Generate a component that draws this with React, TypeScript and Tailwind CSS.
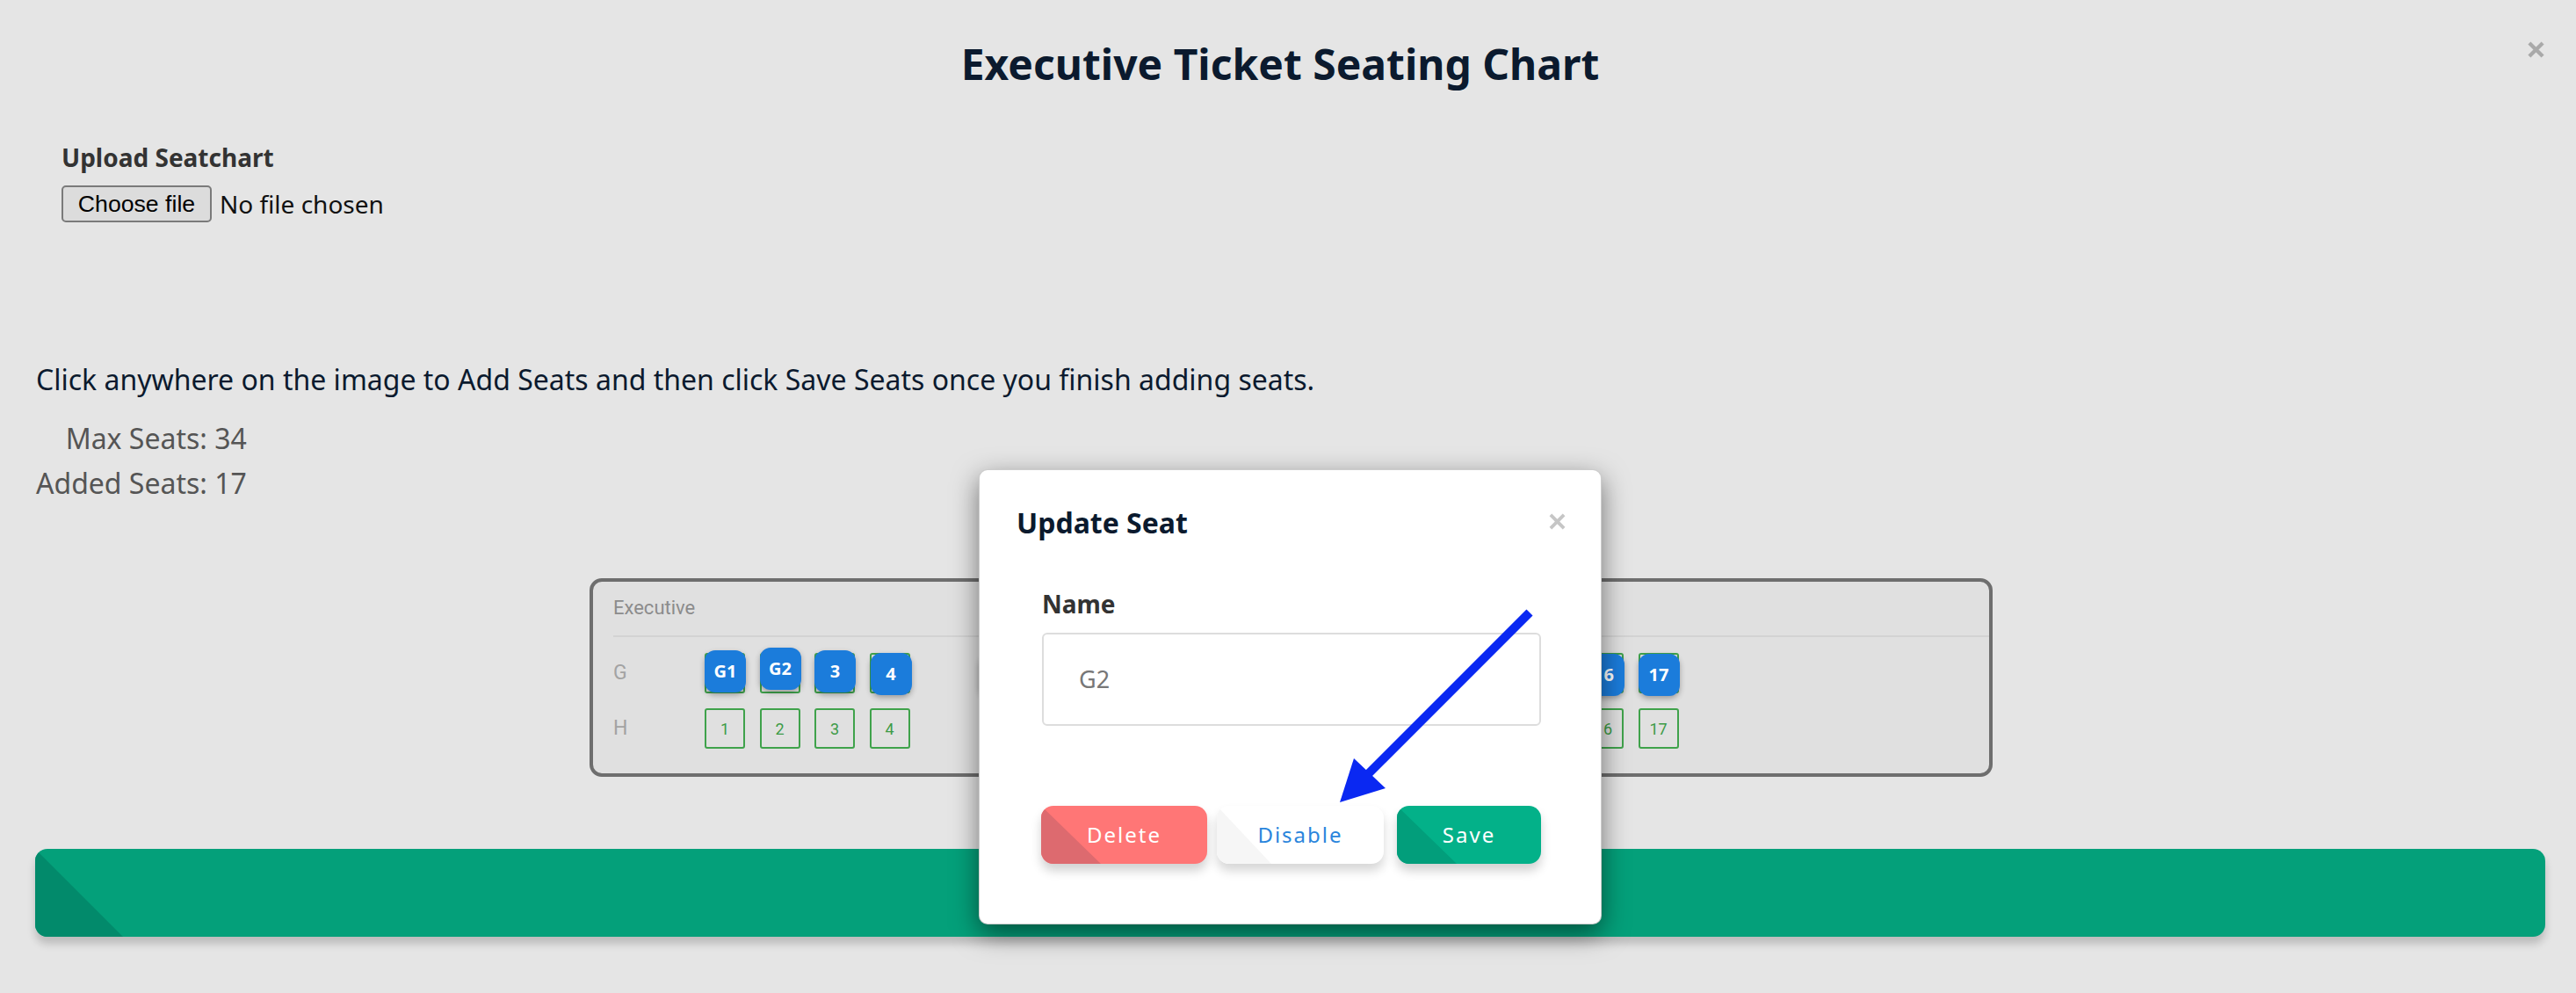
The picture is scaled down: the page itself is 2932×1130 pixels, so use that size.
import React from "react";

const seatNums = Array.from({ length: 17 }, (_, i) => i + 1);

const blueOffset: Record<number, string> = {
  1: "-top-[5px] -left-[2px]",
  2: "-top-[8px] -left-[2px]",
  3: "-top-[5px] -left-[2px]",
  4: "-top-[2px] -left-[1px]",
};

function Seat({ n, blue }: { n: number; blue?: string }) {
  return (
    <div
      className={
        n === 5
          ? "relative ml-[62.5px] flex h-[46px] w-[46px] items-center justify-center rounded-[3px] border-2 border-[#3fa24b] text-[18px] text-[#3d9b47]"
          : "relative flex h-[46px] w-[46px] items-center justify-center rounded-[3px] border-2 border-[#3fa24b] text-[18px] text-[#3d9b47]"
      }
    >
      {blue ? null : n}
      {blue && (
        <div
          className={
            "absolute flex h-[48px] w-[47px] items-center justify-center rounded-[12px] bg-[#1b7cdb] text-[20px] font-bold text-white shadow-[0_3px_6px_rgba(0,0,0,0.3)] [font-family:'Noto_Sans',sans-serif] " +
            (blueOffset[n] ?? "-top-[1px] -left-[2px]")
          }
        >
          {blue}
        </div>
      )}
    </div>
  );
}

function XIcon({ color, size, stroke }: { color: string; size: number; stroke: number }) {
  return (
    <svg width={size} height={size} viewBox="0 0 20 20">
      <line x1="2" y1="2" x2="18" y2="18" stroke={color} strokeWidth={stroke} />
      <line x1="18" y1="2" x2="2" y2="18" stroke={color} strokeWidth={stroke} />
    </svg>
  );
}

export default function App() {
  return (
    <div className="relative h-[1130px] w-[2932px] overflow-hidden bg-[#e5e5e5] [font-family:'Noto_Sans',sans-serif]">
      {/* page close */}
      <div className="absolute left-[2877px] top-[47px]">
        <XIcon color="#a9a9a9" size={19} stroke={4.5} />
      </div>

      {/* title */}
      <div className="pr-[18px] pt-[44px] text-center">
        <h1 className="text-[48px] font-bold leading-[58px] text-[#0b1a2e]">Executive Ticket Seating Chart</h1>
      </div>

      {/* upload */}
      <div className="ml-[70px] mt-[60px]">
        <div className="text-[28px] font-bold leading-[34px] text-[#333333]">Upload Seatchart</div>
        <div className="mt-[15px] flex items-center">
          <div className="flex h-[42px] w-[171px] items-center justify-center rounded-[5px] border-2 border-[#7a7a7a] bg-[#dcdcdc] text-[26.67px] text-black [font-family:'Liberation_Sans',Arial,sans-serif]">
            Choose file
          </div>
          <span className="ml-[9px] text-[28px] text-[#111111]">No file chosen</span>
        </div>
      </div>

      {/* instructions */}
      <div className="ml-[41px] mt-[159px] text-[32px] leading-[40px] text-[#0b1a2e]">
        Click anywhere on the image to Add Seats and then click Save Seats once you finish adding seats.
      </div>
      <div className="ml-[41px] mt-[21px] inline-flex flex-col items-end text-[32px] leading-[51px] text-[#555555]">
        <div>Max Seats: 34</div>
        <div>Added Seats: 17</div>
      </div>

      {/* seat chart */}
      <div className="ml-[671px] mt-[83px] w-[1597px] rounded-[14px] border-4 border-[#6e6e6e] bg-[#e0e0e0] pb-[28px] [font-family:Roboto,sans-serif]">
        <div className="ml-[23px] border-b-2 border-[#d3d3d3] pb-[18px] pt-[17px] text-[22px] leading-[26px] text-[#8c8c8c]">
          Executive
        </div>
        <div className="ml-[23px] mt-[18px] flex h-[46px] items-center">
          <div className="w-[104px] text-[23px] text-[#a3a3a3]">G</div>
          <div className="flex gap-[16.5px]">
            {seatNums.map((n) => (
              <Seat key={n} n={n} blue={n === 1 ? "G1" : n === 2 ? "G2" : String(n)} />
            ))}
          </div>
        </div>
        <div className="ml-[23px] mt-[17px] flex h-[46px] items-center">
          <div className="w-[104px] text-[23px] text-[#a3a3a3]">H</div>
          <div className="flex gap-[16.5px]">
            {seatNums.map((n) => (
              <Seat key={n} n={n} />
            ))}
          </div>
        </div>
      </div>

      {/* green bar */}
      <div className="relative ml-[40px] mr-[35px] mt-[82px] h-[100px] overflow-hidden rounded-[14px] bg-[#04a07a] shadow-[0_8px_10px_rgba(0,0,0,0.18)]">
        <div className="absolute inset-0 bg-[#028a6b] [clip-path:polygon(0_0,100px_100%,0_100%)]" />
      </div>

      {/* modal */}
      <div className="absolute left-[1114px] top-[534px] h-[518px] w-[709px] rounded-[10px] border border-[rgba(0,0,0,0.2)] bg-white shadow-[0_10px_30px_rgba(0,0,0,0.5)]">
        <div className="flex items-start justify-between pl-[42px] pr-[40px] pt-[40px]">
          <div className="text-[32px] font-bold leading-[40px] text-[#0b1a2e]">Update Seat</div>
          <div className="mt-[9px]">
            <XIcon color="#c6c6c6" size={19} stroke={4} />
          </div>
        </div>
        <div className="ml-[71px] mt-[55px] text-[28px] font-bold leading-[34px] text-[#333333]">Name</div>
        <div className="ml-[71px] mt-[16px] flex h-[106px] w-[568px] items-center rounded-[6px] border-2 border-[#dddddd] pl-[40px] text-[27px] text-[#777777]">
          G2
        </div>
        <div className="ml-[70px] mt-[91px] flex text-[24px] tracking-[2px]">
          <div className="relative flex h-[66px] w-[189px] items-center justify-center overflow-hidden rounded-[14px] bg-[#ff7676] text-white shadow-[0_8px_12px_rgba(0,0,0,0.18)]">
            <div className="absolute inset-0 bg-[#dd6a6f] [clip-path:polygon(0_0,68px_100%,0_100%)]" />
            <span className="relative">Delete</span>
          </div>
          <div className="relative ml-[11px] flex h-[66px] w-[190px] items-center justify-center overflow-hidden rounded-[14px] bg-white text-[#2a85dc] shadow-[0_8px_12px_rgba(0,0,0,0.16)]">
            <div className="absolute inset-0 bg-[#f6f6f6] [clip-path:polygon(0_0,62px_100%,0_100%)]" />
            <span className="relative">Disable</span>
          </div>
          <div className="relative ml-[15px] flex h-[66px] w-[164px] items-center justify-center overflow-hidden rounded-[14px] bg-[#03b189] text-white shadow-[0_8px_12px_rgba(0,0,0,0.18)]">
            <div className="absolute inset-0 bg-[#029e7b] [clip-path:polygon(0_0,68px_100%,0_100%)]" />
            <span className="relative">Save</span>
          </div>
        </div>
      </div>

      {/* annotation arrow */}
      <svg className="pointer-events-none absolute left-0 top-0" width="2932" height="1130" viewBox="0 0 2932 1130">
        <line x1="1741" y1="697" x2="1556" y2="882" stroke="#0a28f2" strokeWidth="10" />
        <polygon points="1525,913 1541,863 1577,897" fill="#0a28f2" />
      </svg>
    </div>
  );
}
